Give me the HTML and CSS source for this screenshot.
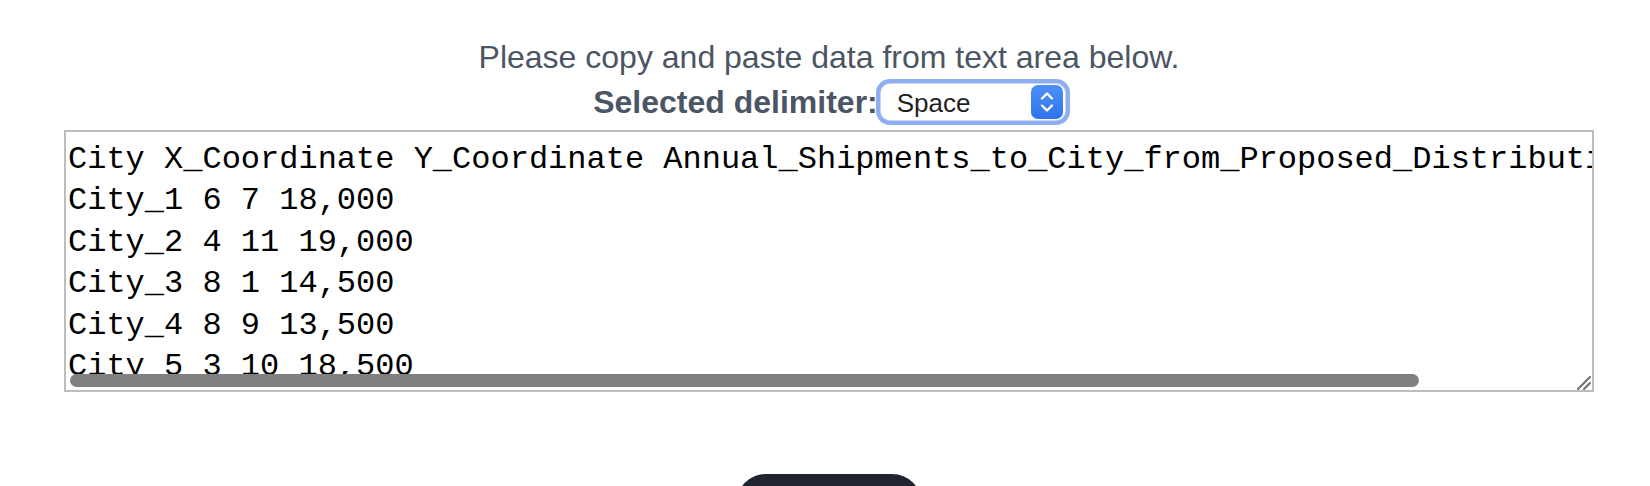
FILE: index.html
```html
<!DOCTYPE html>
<html lang="en">
<head>
<meta charset="utf-8">
<title>Data input</title>
<link rel="stylesheet" href="styles.css">
</head>
<body>
<main class="page">
  <p class="intro">Please copy and paste data from text area below.</p>
  <div class="delim-row">
    <label class="delim-label" for="delim">Selected delimiter:</label>
    <div class="select" id="delim">
      <span class="select-value">Space</span>
      <svg class="stepper" width="32" height="34" viewBox="0 0 32 34" aria-hidden="true">
        <defs>
          <linearGradient id="g" x1="0" y1="0" x2="0" y2="1">
            <stop offset="0" stop-color="#4f90f7"/>
            <stop offset="1" stop-color="#2f73ee"/>
          </linearGradient>
        </defs>
        <rect x="0" y="0" width="32" height="34" rx="7" fill="url(#g)"/>
        <path d="M11 13.5 L16 8.5 L21 13.5" fill="none" stroke="#fff" stroke-width="2.4" stroke-linecap="round" stroke-linejoin="round"/>
        <path d="M11 20.5 L16 25.5 L21 20.5" fill="none" stroke="#fff" stroke-width="2.4" stroke-linecap="round" stroke-linejoin="round"/>
      </svg>
    </div>
  </div>
  <div class="area-wrap">
    <textarea class="data" wrap="off" spellcheck="false">City X_Coordinate Y_Coordinate Annual_Shipments_to_City_from_Proposed_Distribution_Center
City_1 6 7 18,000
City_2 4 11 19,000
City_3 8 1 14,500
City_4 8 9 13,500
City_5 3 10 18,500</textarea>
    <div class="hscroll"></div>
    <svg class="grip" width="16" height="16" viewBox="0 0 16 16" aria-hidden="true">
      <path d="M3 15 L15 3 M9 15 L15 9" stroke="#6e6e6e" stroke-width="2" stroke-linecap="round"/>
    </svg>
  </div>
  <div class="actions">
    <button class="submit" type="button">Submit</button>
  </div>
</main>
</body>
</html>
```
FILE: styles.css
```css
html, body {
  margin: 0;
  padding: 0;
  background: #ffffff;
}

body {
  font-family: "Liberation Sans", Arial, sans-serif;
  overflow: hidden;
}

.page {
  padding: 37px 56px 0 64px;
  display: flex;
  flex-direction: column;
  align-items: center;
}

.intro {
  margin: 0;
  font-size: 32px;
  line-height: 40px;
  color: #4b5563;
  text-align: center;
}

.delim-row {
  display: flex;
  align-items: center;
  justify-content: center;
  height: 49px;
}

.delim-label {
  font-size: 32px;
  font-weight: bold;
  color: #4b5563;
  line-height: 40px;
}

.select {
  display: flex;
  align-items: center;
  justify-content: space-between;
  width: 184px;
  height: 36px;
  box-sizing: border-box;
  margin-left: 3px;
  padding: 0 2px 0 16px;
  background: #ffffff;
  border-radius: 9px;
  box-shadow: 0 0 0 1px #c9d6f3, 0 0 0 5px #8eaef1;
}

.select-value {
  font-size: 26px;
  color: #1f1f1f;
  line-height: 30px;
  padding-top: 3px;
}

.stepper {
  display: block;
}

.area-wrap {
  position: relative;
  align-self: flex-start;
  margin-top: 4px;
  width: 1530px;
  height: 262px;
}

.data {
  display: block;
  box-sizing: border-box;
  width: 100%;
  height: 100%;
  margin: 0;
  padding: 7px 2px 0;
  border: 2px solid #bdbdbd;
  border-radius: 0;
  font-family: "Liberation Mono", "Courier New", monospace;
  font-size: 32px;
  line-height: 41.4px;
  color: #000000;
  background: #ffffff;
  overflow: hidden;
  resize: none;
  outline: none;
}

.hscroll {
  position: absolute;
  left: 6px;
  top: 244px;
  width: 1349px;
  height: 13px;
  border-radius: 7px;
  background: #808080;
}

.grip {
  position: absolute;
  right: 3px;
  bottom: 2px;
}

.actions {
  display: flex;
  justify-content: center;
  width: 100%;
  margin-top: 82px;
}

.submit {
  width: 186px;
  height: 84px;
  padding: 24px 0 0;
  border: none;
  border-radius: 30px;
  background: #1f2430;
  color: #ffffff;
  font-family: "Liberation Sans", Arial, sans-serif;
  font-size: 28px;
  font-weight: bold;
}
```
